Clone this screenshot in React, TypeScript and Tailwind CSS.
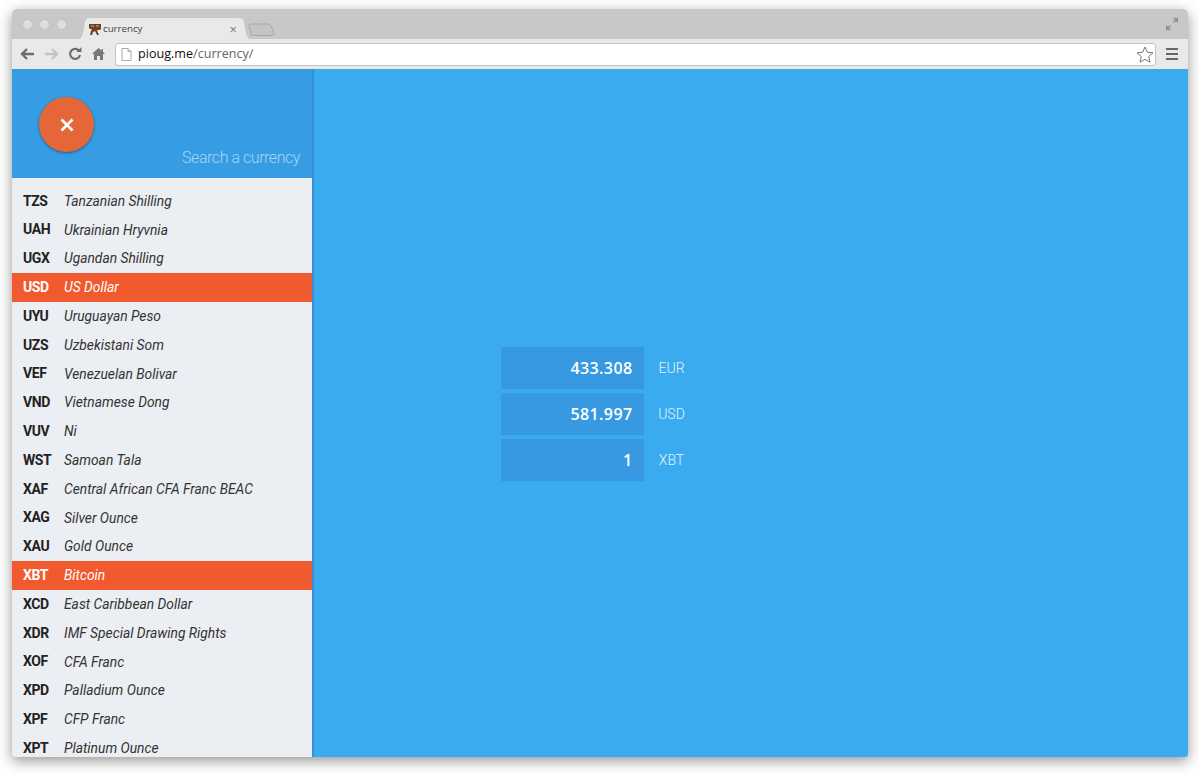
import React from "react";

const rows: [string, string, boolean?][] = [
  ["TWD", "New Taiwan Dollar"],
  ["TZS", "Tanzanian Shilling"],
  ["UAH", "Ukrainian Hryvnia"],
  ["UGX", "Ugandan Shilling"],
  ["USD", "US Dollar", true],
  ["UYU", "Uruguayan Peso"],
  ["UZS", "Uzbekistani Som"],
  ["VEF", "Venezuelan Bolivar"],
  ["VND", "Vietnamese Dong"],
  ["VUV", "Ni"],
  ["WST", "Samoan Tala"],
  ["XAF", "Central African CFA Franc BEAC"],
  ["XAG", "Silver Ounce"],
  ["XAU", "Gold Ounce"],
  ["XBT", "Bitcoin", true],
  ["XCD", "East Caribbean Dollar"],
  ["XDR", "IMF Special Drawing Rights"],
  ["XOF", "CFA Franc"],
  ["XPD", "Palladium Ounce"],
  ["XPF", "CFP Franc"],
  ["XPT", "Platinum Ounce"],
  ["XTS", "Testing Code"],
];

const values: [string, string][] = [
  ["433.308", "EUR"],
  ["581.997", "USD"],
  ["1", "XBT"],
];

function Dot() {
  return <span className="block w-[11px] h-[11px] rounded-full bg-[#dedede] border border-[#c0c0c0]" />;
}

export default function App() {
  return (
    <div className="w-[1199px] h-[774px] bg-white overflow-hidden pt-[9px] pl-[12px] font-['Roboto',sans-serif]">
      <div className="w-[1176px] h-[748px] flex flex-col rounded-t-[5px] rounded-b-[3px] overflow-hidden shadow-[0_4px_14px_rgba(0,0,0,0.42)]">
        {/* tab strip */}
        <div className="h-[30px] shrink-0 bg-[#c8c8c8] flex items-end relative">
          <div className="flex gap-[6px] ml-[10px] mb-[9px]">
            <Dot /><Dot /><Dot />
          </div>
          <div className="ml-[11px] w-[172px] h-[21px] pt-[1px] bg-[#e9e9e9] [clip-path:path('M0_21C3_21_4_19_5_15L7_4C8_1_9_0_11_0H161C164_0_165_1_166_4L168_15C169_19_170_21_172_21Z')] flex items-center pl-[10px] pr-[13px] [font-family:'Open_Sans',sans-serif] text-[9.7px] text-[#444]">
            <svg width="14" height="13" viewBox="0 0 14 13" className="mr-[1px] shrink-0">
              <path d="M1 1h12v5l-1 1H9l1 3 1 2H9L7 8 5 9l-1 3H2l1-4 1-2H2L1 5z" fill="#6f3f22" />
              <path d="M3 2h3v2H3zM8 2h3v2H8z" fill="#a5744f" />
            </svg>
            <span className="flex-1">currency</span>
            <span className="text-[13px] text-[#777] leading-none">×</span>
          </div>
          <svg width="27" height="13" viewBox="0 0 27 13" className="-ml-[2px] mb-[3px] shrink-0">
            <path d="M3.500 12.500 1 3Q.5 1 3 1H20Q22 1 23 3L26 10Q27 12.500 25 12.500Z" fill="#c4c4c4" stroke="#a8a8a8" />
          </svg>
          <svg width="14" height="14" viewBox="0 0 14 14" className="absolute right-[9px] top-[8px]" fill="#8f8f8f">
            <path d="M8 1h5v5l-2-2-2 2-1-1 2-2z M1 8l2 2 2-2 1 1-2 2 2 2H1z" />
          </svg>
        </div>
        {/* toolbar */}
        <div className="h-[30px] shrink-0 bg-[#e9e9e9] flex items-center">
          <div className="w-[103px] flex items-center pl-[8px] gap-[9px] shrink-0">
            <svg width="15" height="14" viewBox="0 0 15 14"><path d="M7 2 2 7l5 5M2 7h12" fill="none" stroke="#6e6e6e" strokeWidth="2.4" /></svg>
            <svg width="15" height="14" viewBox="0 0 15 14"><path d="M8 2l5 5-5 5M13 7H1" fill="none" stroke="#c4c4c4" strokeWidth="2.4" /></svg>
            <svg width="14" height="14" viewBox="0 0 14 14"><path d="M11.500 4.500A5 5 0 1 0 12 8" fill="none" stroke="#6e6e6e" strokeWidth="2.2" /><path d="M8.500 5h5V0z" fill="#6e6e6e" /></svg>
            <svg width="13" height="14" viewBox="0 0 13 14" className="ml-[1px]"><path d="M6.500 1 0 7h2v6h3V9h3v4h3V7h2l-2-2V2H9.500v1.500z" fill="#777" /></svg>
          </div>
          <div className="w-[1041px] h-[23px] bg-white rounded-[3px] border border-[#c4c4c4] flex items-center pl-[5px] pr-[1px] text-[12.6px] [font-family:'Open_Sans',sans-serif] leading-none">
            <svg width="11" height="13" viewBox="0 0 11 13" className="mr-[6px] shrink-0"><path d="M1 .5h6l3 3v9H1zM7 .5v3h3" fill="#fff" stroke="#aaa" /></svg>
            <span className="text-[#111] pt-[1px]">pioug.me</span>
            <span className="text-[#666] pt-[1px]">/currency/</span>
            <svg width="18" height="17" viewBox="0 0 18 17" className="ml-auto"><path d="M9 1l2.300 5.200 5.700.6-4.300 3.800 1.300 5.600L9 13.300 4 16.200l1.300-5.600L1 6.800l5.700-.6z" fill="#fff" stroke="#777" /></svg>
          </div>
          <div className="flex-1 flex justify-center">
            <span className="w-[12px] flex flex-col gap-[3px]">
              <span className="h-[2px] bg-[#666]" /><span className="h-[2px] bg-[#666]" /><span className="h-[2px] bg-[#666]" />
            </span>
          </div>
        </div>
        {/* page */}
        <div className="flex-1 min-h-0 flex bg-[#3babf0]">
          <aside className="w-[302px] shrink-0 flex flex-col border-r-2 border-[#3391d3] relative">
            <header className="h-[108px] shrink-0 bg-[#369ce3] relative flex items-end justify-end pr-[12px] pb-[9px] text-[16px] tracking-[-0.45px] text-[#a5d6f7] font-light leading-[20px]">
              Search a currency
              <span className="absolute left-[27px] top-[28px] w-[55px] h-[55px] rounded-full bg-[#e56638] shadow-[0_1px_3px_rgba(0,0,0,0.4)] flex items-center justify-center">
                <svg width="14" height="14" viewBox="0 0 14 14"><path d="M1.500 1.500l11 11M12.500 1.500l-11 11" stroke="#fff" strokeWidth="2.500" /></svg>
              </span>
            </header>
            <ul className="flex-1 min-h-0 overflow-hidden bg-[linear-gradient(#369ce3_1px,#ebeef2_1px)]">
              {rows.map(([code, name, active], i) => (
                <li
                  key={code}
                  className={`h-[28.8px] flex items-center pl-[11px] ${i === 0 ? "-mt-[19px]" : ""} ${active ? "bg-[#f15a2f] text-white" : "text-[#222]"}`}
                >
                  <span className="w-[41px] font-bold text-[14px] tracking-[-0.4px]">{code}</span>
                  <span className={`italic text-[13.8px] ${active ? "text-white" : "text-[#333]"}`}>{name}</span>
                </li>
              ))}
            </ul>
          </aside>
          <main className="flex-1 flex flex-col justify-center pl-[187px] gap-[4px] pt-[1px]">
            {values.map(([v, c]) => (
              <div key={c} className="flex items-center h-[42px]">
                <div className="w-[143px] h-full bg-[#3699e2] flex items-center justify-end pr-[11.5px] text-white text-[16px] tracking-[0.4px] font-semibold [font-family:'Open_Sans',sans-serif]">
                  {v}
                </div>
                <div className="w-[55px] text-center text-[14px] text-[#e3f2fd] font-light mt-[1px]">{c}</div>
              </div>
            ))}
          </main>
        </div>
      </div>
    </div>
  );
}
